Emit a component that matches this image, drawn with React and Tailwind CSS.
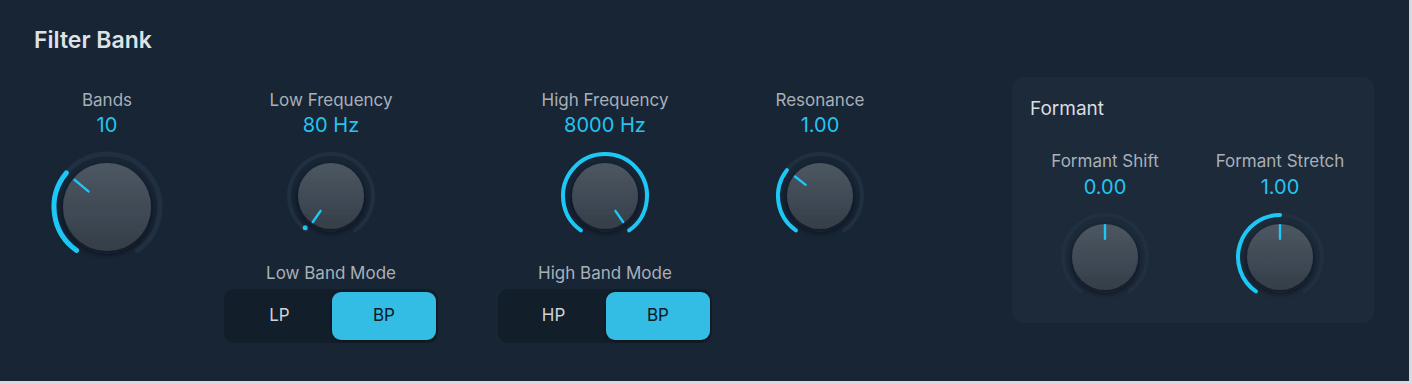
import React from 'react'

const FONT = { fontFamily: 'Inter, "Noto Sans", sans-serif' }

function pt(c, r, deg) {
  const a = (deg * Math.PI) / 180
  return [c + r * Math.sin(a), c - r * Math.cos(a)]
}

function arc(c, r, from, to) {
  const [x1, y1] = pt(c, r, from)
  const [x2, y2] = pt(c, r, to)
  const large = to - from > 180 ? 1 : 0
  return `M ${x1} ${y1} A ${r} ${r} 0 ${large} 1 ${x2} ${y2}`
}

function Knob({ big, from = -145, value }) {
  const size = big ? 124 : 100
  const c = size / 2
  const ring = big ? 53 : 42
  const sw = big ? 5 : 4
  const kr = big ? 44 : 33
  const [px1, py1] = pt(c, kr * 0.55, value)
  const [px2, py2] = pt(c, kr * 0.96, value)
  const id = big ? 'kb' : 'ks'
  return (
    <svg width={size} height={size} viewBox={`0 0 ${size} ${size}`}>
      <defs>
        <linearGradient id={id + 'g'} x1="0" y1="0" x2="0" y2="1">
          <stop offset="0" stopColor="#4d5762" />
          <stop offset="1" stopColor="#343e49" />
        </linearGradient>
        <filter id={id + 'f'} x="-30%" y="-30%" width="160%" height="160%">
          <feDropShadow dx="0" dy="3" stdDeviation="3" floodColor="#0a121b" floodOpacity="0.75" />
        </filter>
      </defs>
      <path d={arc(c, ring, -145, 145)} fill="none" stroke="#203040" strokeWidth={sw} strokeLinecap="round" />
      {value > from ? (
        <path d={arc(c, ring, from, value)} fill="none" stroke="#1ec8f6" strokeWidth={sw} strokeLinecap="round" />
      ) : null}
      {value <= -145 ? (
        <circle cx={pt(c, ring - 1, -141)[0]} cy={pt(c, ring - 1, -141)[1]} r={sw / 2 + 0.5} fill="#1ec8f6" />
      ) : null}
      <circle cx={c} cy={c} r={kr} fill={`url(#${id}g)`} filter={`url(#${id}f)`} />
      <line x1={px1} y1={py1} x2={px2} y2={py2} stroke="#1ec8f6" strokeWidth="2.4" strokeLinecap="round" />
    </svg>
  )
}

function Control({ label, value, gap = 'mt-[3px]', children }) {
  return (
    <div className="flex flex-col items-center">
      <div className="text-[17px] leading-[20px] text-[#a9b0b8]">{label}</div>
      <div className={`${gap} text-[20px] leading-[24px] text-[#23c4f2]`}>{value}</div>
      {children}
    </div>
  )
}

function Segmented({ left }) {
  return (
    <div className="flex h-[54px] w-[214px] rounded-[11px] bg-[#121e29] py-[3px] pl-[3px] pr-[2px]">
      <div className="flex flex-1 items-center justify-center text-[17px] text-[#cfd3d7]">{left}</div>
      <div className="flex w-[104px] items-center justify-center rounded-[9px] bg-[#33bde4] text-[17px] text-[#0d1925] shadow-[0_1px_3px_rgba(0,0,0,0.4)]">
        BP
      </div>
    </div>
  )
}

export default function App() {
  return (
    <div className="h-[384px] w-[1412px] bg-[#d6dadd]" style={FONT}>
      <div className="h-[381px] w-[1409px] bg-[#172535] pt-[26px]">
        <div className="pl-[34px] text-[23px] font-semibold leading-[28px] text-[#dfe2e5]">Filter Bank</div>
        <div className="flex items-start">
          <div className="ml-[32px] mt-[36px] w-[150px]">
            <Control label="Bands" value="10">
              <div className="mt-[8px]">
                <Knob big value={-50} />
              </div>
            </Control>
          </div>
          <div className="ml-[42px] mt-[36px] flex w-[214px] flex-col items-center">
            <Control label="Low Frequency" value="80 Hz">
              <div className="mt-[9px]">
                <Knob value={-145} />
              </div>
            </Control>
            <div className="mt-[17px] text-[17px] leading-[20px] text-[#a9b0b8]">Low Band Mode</div>
            <div className="mt-[6px]">
              <Segmented left="LP" />
            </div>
          </div>
          <div className="ml-[60px] mt-[36px] flex w-[214px] flex-col items-center">
            <Control label="High Frequency" value="8000 Hz">
              <div className="mt-[9px]">
                <Knob value={145} />
              </div>
            </Control>
            <div className="mt-[17px] text-[17px] leading-[20px] text-[#a9b0b8]">High Band Mode</div>
            <div className="mt-[6px]">
              <Segmented left="HP" />
            </div>
          </div>
          <div className="ml-[33px] mt-[36px] w-[150px]">
            <Control label="Resonance" value="1.00">
              <div className="mt-[9px]">
                <Knob value={-52} />
              </div>
            </Control>
          </div>
          <div className="ml-[117px] mt-[23px] h-[246px] w-[362px] rounded-[11px] bg-[#1c2a39] px-[18px] pt-[20px]">
            <div className="text-[19px] leading-[24px] text-[#d9dde1]">Formant</div>
            <div className="mt-[30px] flex gap-[25px]">
              <div className="w-[150px]">
                <Control label="Formant Shift" value="0.00" gap="mt-[4px]">
                  <div className="mt-[8px]">
                    <Knob value={0} from={0} />
                  </div>
                </Control>
              </div>
              <div className="w-[150px]">
                <Control label="Formant Stretch" value="1.00" gap="mt-[4px]">
                  <div className="mt-[8px]">
                    <Knob value={0} />
                  </div>
                </Control>
              </div>
            </div>
          </div>
        </div>
      </div>
    </div>
  )
}
